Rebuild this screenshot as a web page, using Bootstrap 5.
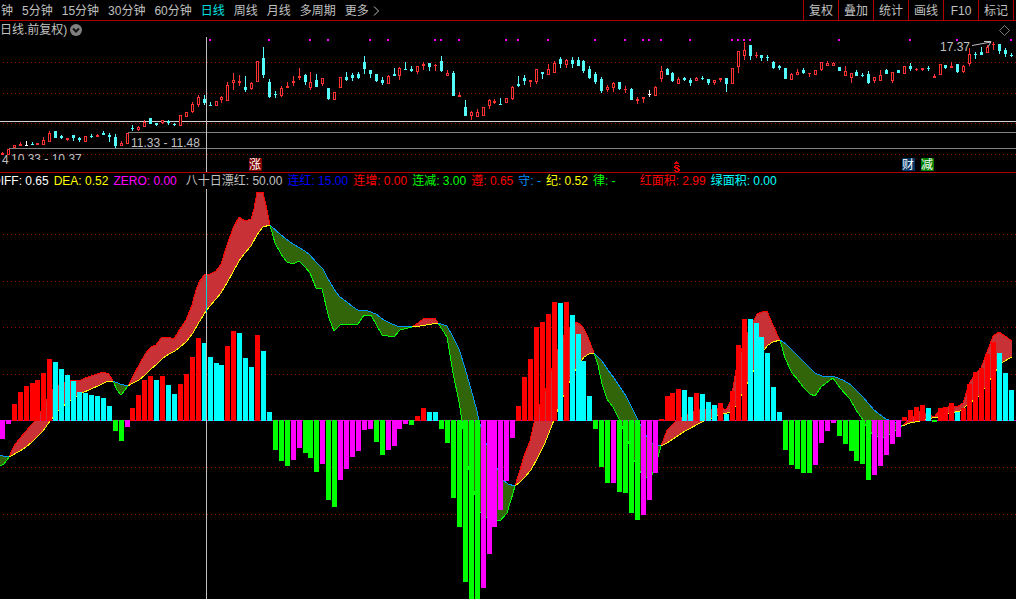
<!DOCTYPE html>
<html lang="zh-CN">
<head>
<meta charset="utf-8">
<meta name="viewport" content="width=device-width, initial-scale=1">
<title>日线.前复权</title>
<link href="https://cdn.jsdelivr.net/npm/bootstrap@5.3.0/dist/css/bootstrap.min.css" rel="stylesheet">
<style>
  body { background: #000; color: #c0c0c0; font: 12px/16px "Liberation Sans", "Noto Sans CJK SC", sans-serif; }
  .period-bar { height: 21px; border-bottom: 1px solid #b00000; }
  .period-list { gap: 9px; padding: 1px 0 0 1px; }
  .period-list a { color: #c0c0c0; text-decoration: none; white-space: nowrap; }
  .period-list a.active { color: #00e0e0; }
  .tool-list { margin-right: 2px; border-right: 1px solid #b00000; }
  .tool-list button { width: 35px; padding: 1px 0 0; border: 0; border-left: 1px solid #b00000; background: none; color: #c0c0c0; }
  .chart-title { height: 16px; padding: 2px 6px 0 0; }
  .round-btn { width: 12px; height: 12px; margin-left: 3px; padding: 0; border: 0; background: none; line-height: 0; }
  .price-plot { height: 135px; }
  .legend-row { height: 17px; border-top: 1px solid #b00000; gap: 5px; margin-left: -8px; white-space: nowrap; }
  .legend-row .wide-start { margin-left: 4px; }
  .legend-row .group-start { margin-left: 19px; }
  .min-h-0 { min-height: 0; }
  svg { display: block; }
  svg text { font-size: 12px; fill: #c0c0c0; }
  svg .tag { fill: #fff; text-anchor: middle; }
  .sharp { shape-rendering: crispEdges; }
  .grid-dots { stroke: #a00000; stroke-dasharray: 1 3; }
</style>
</head>
<body class="vh-100 d-flex flex-column overflow-hidden">

<header class="period-bar d-flex justify-content-between flex-shrink-0">
  <nav class="period-list d-flex align-items-center" aria-label="周期">
    <a href="#">钟</a><a href="#">5分钟</a><a href="#">15分钟</a><a href="#">30分钟</a><a href="#">60分钟</a>
    <a href="#" class="active" aria-current="page">日线</a><a href="#">周线</a><a href="#">月线</a><a href="#">多周期</a>
    <a href="#" class="d-flex align-items-center gap-1">更多
      <svg width="7" height="10" fill="none" stroke="#c0c0c0" aria-hidden="true"><path d="M1 .5 5.5 5 1 9.5"/></svg></a>
  </nav>
  <div class="tool-list d-flex">
    <button type="button">复权</button><button type="button">叠加</button><button type="button">统计</button><button type="button">画线</button><button type="button">F10</button><button type="button">标记</button>
  </div>
</header>

<main class="d-flex flex-column flex-grow-1 min-h-0">
  <section class="flex-shrink-0" aria-label="K线">
    <div class="chart-title d-flex align-items-center">
      <span>日线.前复权)</span>
      <button type="button" class="round-btn" aria-label="展开">
        <svg width="12" height="12"><circle cx="6" cy="6" r="6" fill="#808080"/><path d="M3 4.5 6 7.5 9 4.5" fill="none" stroke="#111" stroke-width="2"/></svg>
      </button>
      <svg class="ms-auto" width="11" height="11" fill="none" stroke="#777" aria-hidden="true"><path d="M5.500.5 10.500 5.500 5.500 10.500.5 5.500Z"/></svg>
    </div>
    <svg class="price-plot w-100" role="img" aria-label="日K线图">
      <defs><clipPath id="rangeClip"><rect x="0" y="150" width="200" height="10"/></clipPath></defs>
      <g transform="translate(0,-37)">
        <g class="sharp">
          <g class="grid-dots" id="priceGrid"></g>
          <g id="signals" fill="#ff00ff"></g>
          <rect x="0" y="121" width="100%" height="1" fill="#d0d0d0"/>
          <rect x="128" y="132" width="100%" height="1" fill="#808080"/>
          <rect x="9" y="148" width="100%" height="1" fill="#808080"/>
          <g id="candles"></g>
          <rect x="206" y="37" width="1" height="135" fill="#c0c0c0"/>
        </g>
        <text x="131" y="147">11.33 - 11.48</text>
        <text x="11" y="163" clip-path="url(#rangeClip)">10.33 - 10.37</text>
        <text x="2" y="164">4</text>
        <text x="940" y="51">17.37</text>
        <path d="M972 45.500 991 42M984 41.500 991 41.500 988 47" fill="none" stroke="#c0c0c0"/>
        <rect x="249" y="158" width="13" height="13" rx="1" fill="#800000"/><text class="tag" x="255" y="169">涨</text>
        <rect x="902" y="158" width="13" height="13" rx="1" fill="#003366"/><text class="tag" x="908" y="169">财</text>
        <rect x="921" y="158" width="13" height="13" rx="1" fill="#008000"/><text class="tag" x="927" y="169">减</text>
        <path class="sharp" d="M676 161h1v1h1v1h1v1h-5v-1h1v-1h1zM675 165h4v1h1v1h-2v-1h-2v1h2v1h1v1h1v2h-1v1h-4v-1h-1v-1h2v1h2v-1h-1v-1h-2v-1h-1v-2h1z" fill="#e00000"/>
      </g>
    </svg>
  </section>

  <section class="d-flex flex-column flex-grow-1 min-h-0" aria-label="指标">
    <div class="legend-row d-flex align-items-center flex-shrink-0">
      <span style="color:#fff">DIFF: 0.65</span>
      <span style="color:#ff0">DEA: 0.52</span>
      <span style="color:#f0f">ZERO: 0.00</span>
      <span class="wide-start" style="color:#c0c0c0">八十日漂红: 50.00</span>
      <span style="color:#00f">连红: 15.00</span>
      <span style="color:#f00">连增: 0.00</span>
      <span style="color:#0f0">连减: 3.00</span>
      <span style="color:#f00">遵: 0.65</span>
      <span style="color:#0090ff">守: -</span>
      <span style="color:#ff0">纪: 0.52</span>
      <span style="color:#0f0">律: -</span>
      <span class="group-start" style="color:#f00">红面积: 2.99</span>
      <span style="color:#0ff">绿面积: 0.00</span>
    </div>
    <svg class="w-100 flex-grow-1 min-h-0" role="img" aria-label="指标图">
      <g class="sharp" transform="translate(0,-189)">
        <g class="grid-dots" id="indicatorGrid"></g>
        <g id="bands"></g>
        <rect x="0" y="420" width="100%" height="1" fill="#d000d0"/>
        <g id="bars"></g>
        <rect x="206" y="188" width="1" height="500" fill="#c0c0c0"/>
        <rect x="206" y="275" width="1" height="37" fill="#00d8e0"/>
      </g>
    </svg>
  </section>
</main>

<script src="https://cdn.jsdelivr.net/npm/bootstrap@5.3.0/dist/js/bootstrap.bundle.min.js"></script>
<script>
const put = (id, html) => { document.getElementById(id).innerHTML = html; };
const rect = (x, y, w, h, c) => `<rect x="${x}" y="${y}" width="${w}" height="${h}"${c ? ` fill="${c}"` : ''}/>`;
const dots = ys => ys.map(y => `<line x1="3" x2="100%" y1="${y}.5" y2="${y}.5"/>`).join('');
put('priceGrid', dots([62, 93, 123, 154]));
put('indicatorGrid', dots([234, 281, 327, 374, 467, 514]));
put('signals', [209,268,309,327,369,387,434,440,458,505,517,547,594,624,642,648,660,689,731,737,743,749,838,909,956,1010]
  .map(x => rect(x, 39, 2, 2)).join(''));

// centre x, high, low, body top, body bottom, colour (r rise, c fall, w flat)
const candles = `2 152 155 153 155 r|8 149 155 149 155 r|14 145 148 145 148 r|20 142 146 144 146 r|26 141 146 145 146 w|32 142 145 144 145 c|37 143 145 143 145 r|43 137 145 140 145 r|49 131 142 133 142 r|55 131 138 131 138 c|61 135 139 136 138 c|67 138 141 138 140 r|73 135 141 135 138 c|79 137 142 138 140 c|85 136 142 136 142 r|91 134 138 136 137 c|97 134 137 135 137 r|103 131 135 133 135 c|109 133 142 135 137 c|115 134 148 137 146 c|121 141 146 143 146 r|127 133 144 133 144 r|132 125 131 128 129 c|138 126 131 127 130 r|144 120 127 122 127 r|150 118 124 118 124 c|156 123 126 123 125 c|162 120 124 120 123 r|168 120 125 121 123 c|174 123 126 124 125 c|180 115 126 115 126 r|186 112 117 112 117 r|192 102 113 104 112 r|198 95 107 97 105 r|204 95 105 99 103 c|210 102 106 105 106 c|216 101 106 101 106 r|221 96 103 97 100 r|227 82 101 85 101 r|233 73 90 80 83 r|239 75 86 81 83 r|245 76 92 87 90 c|251 82 90 83 89 r|257 61 82 61 82 r|263 47 78 58 75 c|269 79 98 82 97 c|275 91 98 94 95 c|281 86 97 88 96 r|287 82 88 86 88 r|293 76 86 81 83 r|299 68 80 76 78 r|305 74 85 75 82 c|310 72 90 82 88 r|316 74 87 80 87 c|322 78 86 78 84 r|328 88 100 88 99 c|334 92 100 92 100 r|340 77 88 77 88 r|346 72 81 77 80 c|352 73 81 75 78 c|358 72 79 74 78 c|364 56 74 62 69 c|370 70 78 70 74 c|376 74 82 74 81 c|382 77 85 80 83 c|388 75 84 76 84 r|394 68 76 74 76 c|399 67 80 68 76 r|405 62 70 69 70 c|411 66 72 69 71 c|417 66 74 66 72 r|423 62 70 64 66 r|429 63 71 63 67 c|435 64 71 65 66 r|441 56 72 61 71 c|447 70 76 73 76 r|453 71 96 73 96 c|459 92 97 95 97 r|465 100 116 107 116 c|471 111 120 112 116 r|477 109 117 112 117 r|483 107 116 107 116 r|489 99 109 100 106 r|494 99 104 101 103 r|500 98 105 104 105 c|506 98 103 98 103 r|512 86 100 87 99 r|518 76 87 84 86 c|524 75 85 78 81 c|530 80 87 80 82 r|536 69 84 69 82 r|542 72 79 72 74 c|548 64 75 69 75 r|554 61 73 63 73 r|560 57 68 59 64 c|566 59 68 60 65 r|572 57 68 60 64 c|578 57 66 60 66 c|583 60 73 61 71 c|589 66 79 69 78 c|595 72 84 74 82 c|601 77 93 79 91 c|607 85 92 87 90 r|613 82 92 83 88 r|619 82 90 82 89 c|625 86 93 89 90 r|631 88 100 89 100 c|637 97 104 99 101 r|643 97 103 97 99 r|649 90 97 94 95 w|655 86 96 87 96 r|661 66 82 71 79 r|667 68 75 69 75 c|672 72 82 73 81 c|678 77 84 79 84 r|684 77 81 78 80 c|690 78 86 80 83 c|696 77 81 78 81 r|702 76 80 78 79 c|708 79 85 79 83 c|714 80 85 80 83 r|720 78 82 78 80 r|726 78 92 78 84 c|732 68 84 68 84 r|738 51 73 51 67 r|744 42 60 50 56 r|750 45 60 45 56 c|756 52 58 55 56 r|761 55 61 55 58 c|767 55 61 57 58 c|773 61 69 62 68 c|779 65 70 66 68 c|785 68 79 68 79 c|791 73 80 74 80 r|797 69 75 72 75 r|803 68 74 70 73 c|809 73 77 73 74 r|815 70 75 70 75 r|821 62 71 62 70 r|827 61 66 63 66 r|833 62 66 63 66 r|839 67 71 67 71 c|845 66 76 71 76 r|851 73 83 73 78 r|856 70 76 72 76 c|862 73 77 75 76 c|868 71 84 74 83 c|874 77 83 77 81 r|880 70 81 75 81 r|886 69 74 70 74 c|892 72 83 72 81 r|898 70 73 70 73 c|904 66 74 66 74 r|910 63 71 66 69 c|916 68 71 69 70 r|922 68 71 68 70 r|928 66 71 68 69 c|934 74 78 76 78 r|940 64 75 64 75 r|945 65 69 65 68 c|951 62 68 66 68 r|957 64 73 64 72 c|963 65 73 66 72 r|969 48 66 54 64 r|975 52 59 54 55 c|981 47 55 52 55 c|987 45 53 47 53 r|993 42 50 44 45 r|999 44 54 44 51 c|1005 48 57 50 54 c|1011 53 57 55 56 c`
  .split('|').map(s => s.split(' ').map((v, i) => i < 5 ? +v : v));
const candleColor = { r: '#ff3232', c: '#54fcfc', w: '#ffffff' };
put('candles', candles.map(([x, hi, lo, top, bottom, k]) => {
  const c = candleColor[k];
  let s = rect(x, hi, 1, lo - hi, c) + rect(x - 1, top, 3, bottom - top, c);
  if (k === 'r' && bottom - top > 2) s += rect(x, top + 1, 1, bottom - top - 2, '#000');
  return s;
}).join(''));

// histogram: one entry per candle, colour then the far end of the bar
const bars = `m439 m424 r404 r392 r386 r383 r380 r373 r359 c362 c369 c375 c381 c392 c393 c395 c396 c398 c406 g431 g441 m427 r408 r395 r380 r376 c380 r376 c385 c394 r384 r374 r357 r338 c343 c357 c363 c365 r346 r331 c333 c358 c367 r335 c351 c412
g450 g461 g466 m460 m448 g453 g458 g472 m464 g500 g507 m480 m469 m457 m451 m430 m429 g442 g455 m450 m446 m429 m424 g425 r416 r408 c412 c412 g429 g443 g498 g527 g582 g599 g599 m588 m554 m527 m510 m481 m438
r406 r377 r359 r327 r322 r314 r302 c303 r302 c315 c334 c361 c396 g429 g467 g483 m483 g492 g493 g513 g520 m515 m500 m473 r419 r396 r393 r389 c390 c397 r393 c394 c402 c405 r403 c414 r391 r345 r319 c319 c323 c337 c353 c387 c412
g450 g465 g469 g473 g473 m465 m443 m431 m423 g436 g444 g451 g461 g464 g480 m475 m466 m455 m444 m437 r417 r410 r407 r405 c408 g422 r408 r407 r403 c412 r408 r384 r372 r368 r354 r342 c353 c373 c390`.split(/\s+/);
const barColor = { r: '#ff0000', c: '#00ffff', g: '#00ff00', m: '#ff00ff' };
put('bars', bars.map((b, i) => {
  const end = +b.slice(1), x = candles[i][0] - 2;
  return end < 420 ? rect(x, end, 5, 421 - end, barColor[b[0]]) : rect(x, 420, 5, end - 420, barColor[b[0]]);
}).join(''));

// bands between DIFF and DEA: kind, DIFF points, DEA points
const bands = [
  ['g', '0,466 4,464 9,457', '0,455 3,456 9,457'],
  ['r', '9,457 14,446 20,438 26,431 32,424 38,418 43,406 49,395 53,389 59,385 65,382 71,380 79,381 85,378 97,374 103,372 109,374 113,381', '9,457 20,451 26,447 32,442 38,436 43,431 50,421 58,411 68,402 82,393 91,389 100,385 108,381 113,381'],
  ['g', '113,381 117,390 121,395 125,390 128,386', '113,381 120,384 128,386'],
  ['r', '128,386 133,376 139,365 145,354 151,347 156,345 162,337 168,337 174,339 180,329 186,320 192,305 196,290 199,282 204,275 210,274 216,271 221,264 227,245 233,228 239,217 245,221 251,219 254,209 257,192 263,192 267,210 270,225', '128,386 133,383 139,380 145,375 151,369 157,364 163,358 169,354 175,351 180,347 186,342 193,333 198,324 206,311 210,306 216,299 221,293 227,283 233,272 239,261 245,253 251,246 257,235 263,227 270,225'],
  ['g', '270,225 275,243 281,254 287,262 293,264 299,261 305,267 310,273 316,288 322,289 329,318 334,331 340,325 358,324 364,315 371,315 376,324 382,335 394,337 400,330 412,327', '270,225 281,235 293,244 305,251 310,255 316,262 323,269 328,279 336,292 340,297 347,302 353,307 358,310 368,311 376,314 384,320 390,323 397,326 412,327'],
  ['r', '412,327 418,323 423,319 435,318 438,323', '412,327 420,326 432,324 438,323'],
  ['g', '438,323 447,337 453,373 459,402 462,421 468,466 475,495 480,512 487,518 500,521 507,513 511,500 515,486', '438,323 447,326 453,337 459,349 465,368 471,389 477,411 479,421 486,443 498,470 503,480 508,484 515,486'],
  ['r', '515,486 520,470 524,456 530,441 535,418 540,404 546,388 552,368 557,351 563,337 570,327 577,322 583,327 588,337 594,353', '515,486 519,483 525,477 531,470 537,459 545,443 554,420 557,412 563,397 569,383 575,371 582,360 584,357 589,354 594,353'],
  ['g', '594,353 598,365 602,384 607,399 613,407 620,421 628,441 634,460 641,473 646,478 652,475 657,461 661,446', '594,353 602,361 608,370 614,378 620,387 626,396 632,408 638,420 646,435 652,443 661,446'],
  ['r', '661,446 667,430 672,425 678,419 690,413 700,409 714,409 722,408 726,410 731,400 736,370 742,348 748,332 754,320 757,314 762,312 767,311 773,325 780,340', '661,446 667,443 685,431 704,421 720,415 730,412 736,406 742,394 748,382 754,370 764,350 768,345 773,342 780,340'],
  ['g', '780,340 785,358 792,373 798,380 804,388 810,394 815,396 821,387 833,378 840,388 850,399 856,410 863,420 866,426 872,434 882,438 890,434 902,426', '780,340 786,344 798,356 810,368 815,373 822,376 835,377 843,380 851,385 863,397 874,410 886,419 895,422 902,426'],
  ['r', '902,426 910,419 920,411 928,414 934,417 940,410 951,406 957,407 963,403 969,384 975,374 981,368 987,352 993,336 999,332 1005,336 1012,341', '902,426 910,423 920,421 932,418 942,417 950,413 960,411 970,403 978,397 985,388 991,378 997,369 1003,362 1012,357'],
];
const line = (pts, c) => `<polyline points="${pts}" fill="none" stroke="${c}"/>`;
put('bands', bands.map(([k, diff, dea]) => {
  const back = dea.split(' ').reverse().join(' ');
  return `<polygon points="${diff} ${back}" fill="${k === 'r' ? '#c83237' : '#32640a'}"/>`
    + line(diff, k === 'r' ? '#ff0000' : '#00ff00') + line(dea, k === 'r' ? '#ffff00' : '#0096ff');
}).join(''));
</script>
</body>
</html>
